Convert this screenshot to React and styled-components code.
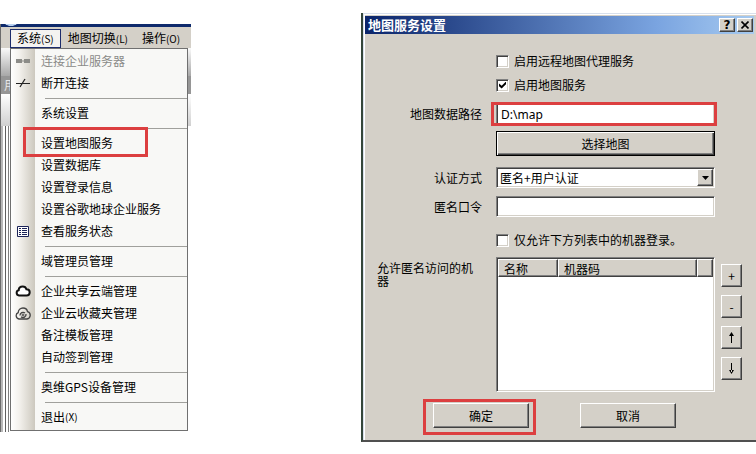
import React, { useState } from "react"
import styled, { createGlobalStyle, css } from "styled-components"

const GlobalStyle = createGlobalStyle`
    * {
        box-sizing: border-box;
    }
    body {
        margin: 0;
        background-color: #fff;
        color: #000;
        font-family: "Noto Sans CJK SC", sans-serif;
        font-size: 12px;
        line-height: 16px;
    }
    button, input, select {
        font: inherit;
        color: inherit;
        margin: 0;
        padding: 0;
        border-radius: 0;
    }
`

const raised = css`
    background-color: #d4d0c8;
    border: 1px solid;
    border-color: #fff #404040 #404040 #fff;
    box-shadow: inset -1px -1px 0 #808080;
`

const sunken = css`
    background-color: #fff;
    border: 1px solid;
    border-color: #808080 #fff #fff #808080;
    box-shadow: inset 1px 1px 0 #404040, inset -1px -1px 0 #d4d0c8;
`

const Page = styled.div`
    display: flex;
    justify-content: space-between;
    align-items: flex-start;
    gap: 24px;
    padding-top: 13px;
`

/* main window */

const MainWindow = styled.section`
    width: 191px;
    margin-top: 11px;
    flex-shrink: 0;
    overflow: hidden;
    border-left: 1px solid #6c6c6c;
    background-color: #d4d0c8;
`

const Strip = styled.div`
    height: 3px;
    background: radial-gradient(ellipse 6px 2px at 10px 0, #b8d0f0 80%, transparent) #0e2a6c;
`

const MenuBar = styled.nav`
    display: flex;
    align-items: center;
    height: 21px;
    padding: 2px 0 0 9px;
`

const MenuButton = styled.button`
    height: 19px;
    padding: 0 6px;
    white-space: nowrap;
    border: 1px solid ${({ $open }) => ($open ? "#1c2c6c" : "transparent")};
    background-color: ${({ $open }) => ($open ? "#f4f3f0" : "transparent")};
`

const Key = styled.span`
    font-size: 10px;
`

const Workspace = styled.div`
    position: relative;
    padding: 0 3px 1px 9px;
    background:
        linear-gradient(90deg, #b8b8b8 2px, #fff 2px, #fff 4px, #606060 4px, #606060 5px, #fff 5px, #fff 7px, #808080 7px, #808080 8px, #fff 8px) 0 78px no-repeat,
        linear-gradient(#fafafa, #a8a8a8 28px, #969696 28px, #969696 46px, #fff 46px, #d0d0d0 78px);
`

const PanelCaption = styled.span`
    position: absolute;
    top: 29px;
    left: 3px;
    color: #e8e8e8;
`

const Menu = styled.ul`
    position: relative;
    list-style: none;
    margin: 0;
    padding: 1px 0 2px;
    border: 1px solid #707070;
    background: linear-gradient(90deg, #fff, #f4f2ee 8px, #ccc8be 24px, #f8f8f6 24px);
`

const MenuItem = styled.li`
    position: relative;
    height: 22px;
`

const MenuAction = styled.button`
    display: flex;
    align-items: center;
    width: 100%;
    height: 22px;
    border: 0;
    background: none;
    text-align: left;
    white-space: nowrap;
    color: ${({ disabled }) => (disabled ? "#8a8a88" : "#000")};
`

const MenuIcon = styled.span`
    display: flex;
    justify-content: center;
    width: 24px;
    margin-right: 6px;
    flex-shrink: 0;
`

const Separator = styled.li`
    height: 8px;
    padding: 4px 0 0 34px;

    &::before {
        content: "";
        display: block;
        height: 1px;
        background-color: #a0a09c;
    }
`

const Mark = styled.span`
    position: absolute;
    inset: ${({ $inset }) => $inset};
    border: 3px solid #dc3f40;
    pointer-events: none;
`

/* dialog */

const Dialog = styled.section`
    flex: 0 1 395px;
    border-left: 2px solid #34463a;
    border-bottom: 2px solid #505050;
    background-color: #d4d0c8;
    box-shadow: inset 1px 1px 0 #d8e0ec, inset 2px 2px 0 #fff;
    padding: 3px 2px 0;
`

const TitleBar = styled.header`
    display: flex;
    align-items: center;
    gap: 2px;
    height: 18px;
    padding: 0 1px 0 3px;
    background: linear-gradient(90deg, #0a246a, #7aa4e0 75%, #a6caf0);
`

const Title = styled.h1`
    flex: 1;
    margin: 0;
    font-size: 13px;
    line-height: 16px;
    color: #fff;
`

const TitleButton = styled.button`
    ${raised}
    display: flex;
    align-items: center;
    justify-content: center;
    width: 16px;
    height: 14px;
    font-family: "DejaVu Sans", sans-serif;
    font-weight: bold;
    line-height: 12px;
`

const Form = styled.form`
    padding: 15px 12px 12px;
`

const Row = styled.div`
    display: grid;
    grid-template-columns: 105px 1fr 21px;
    column-gap: 14px;
    align-items: ${({ $top }) => ($top ? "start" : "center")};
    margin-bottom: ${({ $gap }) => $gap || 0}px;
`

const Label = styled.label`
    text-align: right;
`

const ListLabel = styled.span`
    padding-top: 4px;
    line-height: 13px;
`

const Field = styled.div`
    position: relative;
    grid-column: 2;
    margin-right: -8px;
`

const CheckLabel = styled.label`
    display: flex;
    align-items: center;
    gap: 5px;
    height: 24px;
    white-space: nowrap;
`

const CheckBox = styled.input`
    ${sunken}
    appearance: none;
    display: grid;
    place-items: center;
    width: 13px;
    height: 13px;

    &:checked::before {
        content: "";
        width: 7px;
        height: 7px;
        background-color: #000;
        clip-path: polygon(0 30%, 38% 62%, 100% 0, 100% 40%, 38% 100%, 0 68%);
    }
`

const TextBox = styled.input`
    ${sunken}
    display: block;
    width: 100%;
    height: ${({ $tall }) => ($tall ? "24px" : "21px")};
    padding: 0 4px;
    font-family: "Noto Sans", sans-serif;
`

const WideButton = styled.button`
    ${raised}
    display: block;
    width: 100%;
    height: 25px;
    border-color: #000;
    box-shadow: inset 1px 1px 0 #fff, inset -1px -1px 0 #404040, inset -2px -2px 0 #808080;
`

const Select = styled.select`
    ${sunken}
    appearance: none;
    display: block;
    width: 100%;
    height: 21px;
    padding: 0 20px 0 3px;
`

const Arrow = styled.span`
    ${raised}
    position: absolute;
    top: 2px;
    right: 2px;
    bottom: 2px;
    display: flex;
    align-items: center;
    justify-content: center;
    width: 16px;
    pointer-events: none;
`

const ListBox = styled.div`
    ${sunken}
    height: 135px;
    padding: 1px;
`

const Table = styled.table`
    width: 100%;
    table-layout: fixed;
    border-collapse: separate;
    border-spacing: 0;
`

const HeadCell = styled.th`
    ${raised}
    width: ${({ $width }) => $width || "auto"};
    height: 18px;
    padding: 0 0 0 5px;
    font-weight: normal;
    font-size: 12px;
    line-height: 15px;
    text-align: left;
`

const SideButtons = styled.div`
    display: flex;
    flex-direction: column;
    gap: 8px;
    padding-top: 7px;
`

const SideButton = styled.button`
    ${raised}
    display: flex;
    align-items: center;
    justify-content: center;
    width: 21px;
    height: 23px;
`

const Footer = styled.footer`
    display: flex;
    gap: 51px;
    padding-left: 56px;
`

const ActionHolder = styled.div`
    position: relative;
`

const ActionButton = styled.button`
    ${raised}
    display: block;
    width: 96px;
    height: 25px;
`

const PlugIcon = () => (
    <svg width="14" height="6" viewBox="0 0 14 6" fill="#8c8c88">
        <path d="M0 1h6v4H0zM8 1h6v4H8zM6 2.500h2v1H6z" />
    </svg>
)

const UnplugIcon = () => (
    <svg width="14" height="10" viewBox="0 0 14 10" stroke="#222" fill="none">
        <path d="M0 5.500h14" />
        <path d="M4 9l5-8" strokeWidth="1.300" />
    </svg>
)

const ListIcon = () => (
    <svg width="12" height="11" viewBox="0 0 12 11">
        <path d="M.5.500h11v10H.5z" fill="#fff" stroke="#1c2458" />
        <path d="M2 2.500h2M5 2.500h5M2 4.500h2M5 4.500h5M2 6.500h2M5 6.500h5M2 8.500h2M5 8.500h5" stroke="#1c2458" />
    </svg>
)

const CloudIcon = () => (
    <svg width="16" height="12" viewBox="0 0 16 12">
        <path d="M4 10.500a2.700 2.700 0 0 1-.3-5.300C3.800 3 5.500 1.500 7.700 1.500c1.800 0 3.200 1 3.700 2.700 1.900 0 3.300 1.300 3.300 3.100s-1.400 3.200-3.200 3.200z" fill="#fff" stroke="#111" strokeWidth="2" />
    </svg>
)

const CloudSyncIcon = () => (
    <svg width="16" height="13" viewBox="0 0 16 13" fill="none" stroke="#444">
        <path d="M4 12a3.300 3.300 0 0 1-.8-6.300C3.300 3 5.400 1 8 1c2.300 0 4.100 1.400 4.500 3.600A3.800 3.800 0 0 1 12 12z" strokeWidth="1.300" />
        <path d="M5 8.500a3 3 0 0 1 5-2.400M11 7a3 3 0 0 1-5 2.700" strokeWidth="1.300" />
        <circle cx="8" cy="8" r="1" />
    </svg>
)

const menuItems = [
    { text: "连接企业服务器", icon: <PlugIcon />, disabled: true },
    { text: "断开连接", icon: <UnplugIcon /> },
    null,
    { text: "系统设置" },
    null,
    { text: "设置地图服务", marked: true },
    { text: "设置数据库" },
    { text: "设置登录信息" },
    { text: "设置谷歌地球企业服务" },
    { text: "查看服务状态", icon: <ListIcon /> },
    null,
    { text: "域管理员管理" },
    null,
    { text: "企业共享云端管理", icon: <CloudIcon /> },
    { text: "企业云收藏夹管理", icon: <CloudSyncIcon /> },
    { text: "备注模板管理" },
    { text: "自动签到管理" },
    null,
    { text: "奥维GPS设备管理" },
    null,
    { text: "退出", shortcut: "(X)" },
]

function SystemMenu() {
    return (
        <MainWindow>
            <Strip />
            <MenuBar>
                <MenuButton $open>系统<Key>(S)</Key></MenuButton>
                <MenuButton>地图切换<Key>(L)</Key></MenuButton>
                <MenuButton>操作<Key>(O)</Key></MenuButton>
            </MenuBar>
            <Workspace>
                <PanelCaption>用</PanelCaption>
                <Menu>
                    {menuItems.map((item, i) =>
                        item ? (
                            <MenuItem key={i}>
                                <MenuAction disabled={item.disabled}>
                                    <MenuIcon>{item.icon}</MenuIcon>
                                    {item.text}
                                    {item.shortcut && <Key>{item.shortcut}</Key>}
                                </MenuAction>
                                {item.marked && <Mark $inset="-5px 39px -3px 12px" />}
                            </MenuItem>
                        ) : (
                            <Separator key={i} />
                        )
                    )}
                </Menu>
            </Workspace>
        </MainWindow>
    )
}

function MapServiceDialog() {
    const [remote, setRemote] = useState(false)
    const [local, setLocal] = useState(true)
    const [onlyListed, setOnlyListed] = useState(false)
    const [path, setPath] = useState("D:\\map")

    return (
        <Dialog>
            <TitleBar>
                <Title>地图服务设置</Title>
                <TitleButton>?</TitleButton>
                <TitleButton aria-label="关闭">
                    <svg width="8" height="8" viewBox="0 0 8 8" stroke="#000" strokeWidth="1.600">
                        <path d="M.5.500l7 7M7.500.500l-7 7" />
                    </svg>
                </TitleButton>
            </TitleBar>
            <Form onSubmit={(e) => e.preventDefault()}>
                <Row>
                    <Field>
                        <CheckLabel>
                            <CheckBox type="checkbox" checked={remote} onChange={(e) => setRemote(e.target.checked)} />
                            启用远程地图代理服务
                        </CheckLabel>
                    </Field>
                </Row>
                <Row $gap={5}>
                    <Field>
                        <CheckLabel>
                            <CheckBox type="checkbox" checked={local} onChange={(e) => setLocal(e.target.checked)} />
                            启用地图服务
                        </CheckLabel>
                    </Field>
                </Row>
                <Row $gap={5}>
                    <Label htmlFor="path">地图数据路径</Label>
                    <Field>
                        <TextBox id="path" $tall value={path} onChange={(e) => setPath(e.target.value)} />
                        <Mark $inset="0 -2px 0 -5px" />
                    </Field>
                </Row>
                <Row $gap={11}>
                    <Field>
                        <WideButton type="button">选择地图</WideButton>
                    </Field>
                </Row>
                <Row $gap={8}>
                    <Label htmlFor="auth">认证方式</Label>
                    <Field>
                        <Select id="auth">
                            <option>匿名+用户认证</option>
                        </Select>
                        <Arrow>
                            <svg width="7" height="4" viewBox="0 0 7 4"><path d="M0 0h7L3.500 4z" /></svg>
                        </Arrow>
                    </Field>
                </Row>
                <Row $gap={11}>
                    <Label htmlFor="password">匿名口令</Label>
                    <Field>
                        <TextBox id="password" />
                    </Field>
                </Row>
                <Row $gap={5}>
                    <Field>
                        <CheckLabel>
                            <CheckBox type="checkbox" checked={onlyListed} onChange={(e) => setOnlyListed(e.target.checked)} />
                            仅允许下方列表中的机器登录。
                        </CheckLabel>
                    </Field>
                </Row>
                <Row $top $gap={11}>
                    <ListLabel id="machines">允许匿名访问的机器</ListLabel>
                    <Field>
                        <ListBox>
                            <Table aria-labelledby="machines">
                                <thead>
                                    <tr>
                                        <HeadCell $width="60px">名称</HeadCell>
                                        <HeadCell>机器码</HeadCell>
                                        <HeadCell $width="16px" />
                                    </tr>
                                </thead>
                            </Table>
                        </ListBox>
                    </Field>
                    <SideButtons>
                        <SideButton type="button">+</SideButton>
                        <SideButton type="button">-</SideButton>
                        <SideButton type="button" aria-label="上移">
                            <svg width="7" height="11" viewBox="0 0 7 11"><path d="M3 2h1v9H3zM3.500 0L6 4H1z" /></svg>
                        </SideButton>
                        <SideButton type="button" aria-label="下移">
                            <svg width="7" height="11" viewBox="0 0 7 11"><path d="M3 0h1v9H3zM3.500 11L6 7H1z" /></svg>
                        </SideButton>
                    </SideButtons>
                </Row>
                <Footer>
                    <ActionHolder>
                        <ActionButton type="submit">确定</ActionButton>
                        <Mark $inset="-4px -7px -7px -10px" />
                    </ActionHolder>
                    <ActionButton type="button">取消</ActionButton>
                </Footer>
            </Form>
        </Dialog>
    )
}

export default function App() {
    return (
        <>
            <GlobalStyle />
            <Page>
                <SystemMenu />
                <MapServiceDialog />
            </Page>
        </>
    )
}
